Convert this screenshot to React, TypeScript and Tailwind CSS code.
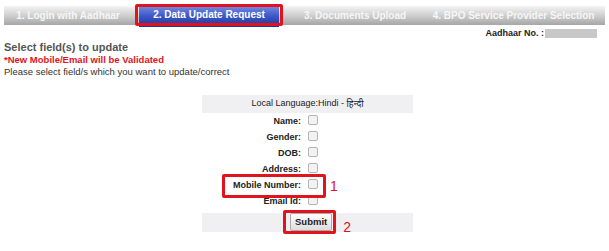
const tabs = [
  "1. Login with Aadhaar",
  "2. Data Update Request",
  "3. Documents Upload",
  "4. BPO Service Provider Selection",
];

const fields = ["Name:", "Gender:", "DOB:", "Address:", "Mobile Number:", "Email Id:"];

function Box() {
  return <span className="inline-block w-[10px] h-[10px] border border-[#b5b5b5] rounded-[2px] bg-[#f3f3f3]" />;
}

export default function App() {
  return (
    <div className="w-[609px] h-[251px] bg-white overflow-hidden font-['Liberation_Sans',Arial,sans-serif]">
      {/* wizard steps */}
      <div className="mx-[4px] mt-[6px] h-[19px] flex items-center bg-gradient-to-b from-[#f4f4f4] via-[#cfcfcf] to-[#a6a6a6] text-[10px] font-bold text-[#f6f6f6]">
        <div className="w-[128px] text-center">{tabs[0]}</div>
        <div className="relative w-[146px] ml-[4px] self-stretch">
          <div className="absolute inset-x-[3px] -top-[1px] h-[22px] bg-gradient-to-b from-[#7d8fe0] via-[#3d58c8] to-[#1e3499] text-white text-center leading-[19px]">
            {tabs[1]}
          </div>
          <div className="absolute -inset-x-[1px] -top-[2px] h-[22px] border-[3px] border-[#e0141c] rounded-[2px]" />
        </div>
        <div className="w-[134px] ml-[6px] text-center">{tabs[2]}</div>
        <div className="flex-1 text-center">{tabs[3]}</div>
      </div>

      <div className="flex justify-end items-center pr-[12px] mt-[2px] text-[9px] font-bold text-[#222]">
        <span className="mr-[1px]">Aadhaar No. :</span>
        <span className="inline-block w-[52px] h-[9px] bg-[#c8c8c8]" />
      </div>

      <div className="px-[4px]">
        <div className="text-[11px] font-bold text-[#555] leading-[13px]">Select field(s) to update</div>
        <div className="text-[9.5px] font-bold text-[#e0141c] leading-[12px]">*New Mobile/Email will be Validated</div>
        <div className="text-[9.5px] text-[#333] leading-[12px]">Please select field/s which you want to update/correct</div>
      </div>

      <div className="w-[211px] ml-[202px] mt-[17px] text-[9px] text-[#222]">
        <div className="h-[18px] bg-[#f0f0f2] flex items-center justify-center">
          Local Language:Hindi -&nbsp;<span className="font-['Noto_Sans',sans-serif]">हिन्दी</span>
        </div>
        <div className="flex flex-col gap-[3px] mt-[3px]">
          {fields.map((f, i) => (
            <div key={f} className="flex items-center h-[13px]">
              <div className="w-[99px] text-right font-bold">
                {i === 4 ? (
                  <span className="relative inline-block">
                    {f}
                    <span className="absolute -left-[11px] -right-[25px] -top-[5px] -bottom-[5px] border-[3px] border-[#e0141c] rounded-[2px]" />
                  </span>
                ) : (
                  f
                )}
              </div>
              <div className="ml-[7px]">
                <Box />
              </div>
              {i === 4 && <span className="ml-[12px] text-[14px] text-[#e0141c] font-normal">1</span>}
            </div>
          ))}
        </div>
        <div className="mt-[4px] h-[19px] bg-[#f0f0f2] flex items-center">
          <div className="relative ml-[88px]">
            <button className="h-[18px] px-[4px] text-[9.5px] font-bold text-[#222] border border-[#aaa] rounded-[2px] bg-gradient-to-b from-white to-[#ddd]">
              Submit
            </button>
            <span className="absolute -left-[7px] -right-[4px] -top-[3px] -bottom-[3px] border-[3px] border-[#e0141c] rounded-[2px]" />
          </div>
          <span className="ml-[11px] mt-[10px] text-[14px] text-[#e0141c]">2</span>
        </div>
      </div>
    </div>
  );
}
